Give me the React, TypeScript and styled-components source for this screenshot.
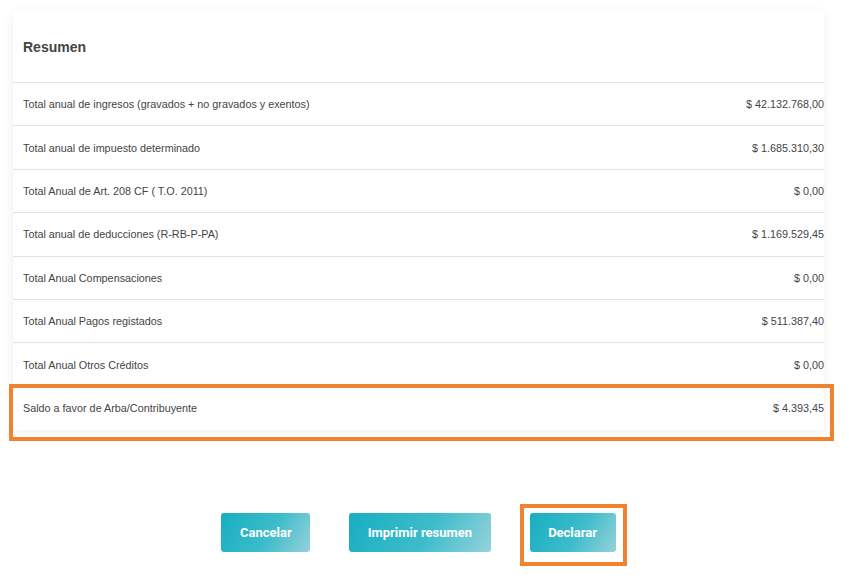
import React from "react";
import styled, { createGlobalStyle } from "styled-components";

const GlobalStyle = createGlobalStyle`
  html, body {
    margin: 0;
    padding: 0;
    background: #ffffff;
    font-family: "Liberation Sans", Arial, sans-serif;
  }
`;

interface Row {
  label: string;
  value: string;
  highlighted?: boolean;
}

const rows: Row[] = [
  { label: "Total anual de ingresos (gravados + no gravados y exentos)", value: "$ 42.132.768,00" },
  { label: "Total anual de impuesto determinado", value: "$ 1.685.310,30" },
  { label: "Total Anual de Art. 208 CF ( T.O. 2011)", value: "$ 0,00" },
  { label: "Total anual de deducciones (R-RB-P-PA)", value: "$ 1.169.529,45" },
  { label: "Total Anual Compensaciones", value: "$ 0,00" },
  { label: "Total Anual Pagos registados", value: "$ 511.387,40" },
  { label: "Total Anual Otros Créditos", value: "$ 0,00" },
  { label: "Saldo a favor de Arba/Contribuyente", value: "$ 4.393,45", highlighted: true },
];

const App = () => {
  return (
    <Page>
      <GlobalStyle />
      <Card>
        <Header>Resumen</Header>
        {rows.map((row) => (
          <SummaryRow key={row.label}>
            <Label>{row.label}</Label>
            <Value>{row.value}</Value>
            {row.highlighted && <RowMark />}
          </SummaryRow>
        ))}
      </Card>
      <Actions>
        <Button>Cancelar</Button>
        <Button>Imprimir resumen</Button>
        <ButtonWrap>
          <Button>Declarar</Button>
          <ButtonMark />
        </ButtonWrap>
      </Actions>
    </Page>
  );
};

const Page = styled.div`
  padding: 11px 25px 40px 13px;
`;

const Card = styled.div`
  background: #ffffff;
  box-shadow: 0 2px 10px rgba(0, 0, 0, 0.07);
`;

const Header = styled.div`
  height: 72px;
  display: flex;
  align-items: center;
  padding-left: 10px;
  font-size: 14px;
  font-weight: bold;
  color: #444444;
  border-bottom: 1px solid #e3e3e3;
  box-sizing: border-box;
`;

const SummaryRow = styled.div`
  position: relative;
  height: 43.4px;
  box-sizing: border-box;
  display: flex;
  align-items: center;
  justify-content: space-between;
  padding-left: 10px;
  font-size: 10.8px;
  color: #444444;
  &:not(:last-child) {
    border-bottom: 1px solid #e3e3e3;
  }
`;

const Label = styled.span``;

const Value = styled.span`
  text-align: right;
`;

const RowMark = styled.div`
  position: absolute;
  left: -4px;
  right: -10px;
  top: -3px;
  bottom: -11px;
  border: 4px solid #f0832f;
  pointer-events: none;
`;

const Actions = styled.div`
  display: flex;
  justify-content: center;
  align-items: flex-start;
  gap: 39px;
  margin-top: 83px;
`;

const ButtonWrap = styled.div`
  position: relative;
  display: flex;
`;

const Button = styled.button`
  display: block;
  height: 39px;
  padding: 0 18.5px;
  border: none;
  border-radius: 3px;
  background: linear-gradient(120deg, #17aec1 0%, #3dbccb 55%, #95d2da 100%);
  color: #ffffff;
  font-family: Roboto, "Liberation Sans", sans-serif;
  font-weight: bold;
  font-size: 13px;
  cursor: pointer;
`;

const ButtonMark = styled.div`
  position: absolute;
  left: -10px;
  right: -11px;
  top: -9px;
  bottom: -14px;
  border: 4px solid #f0832f;
  pointer-events: none;
`;

export default App;
